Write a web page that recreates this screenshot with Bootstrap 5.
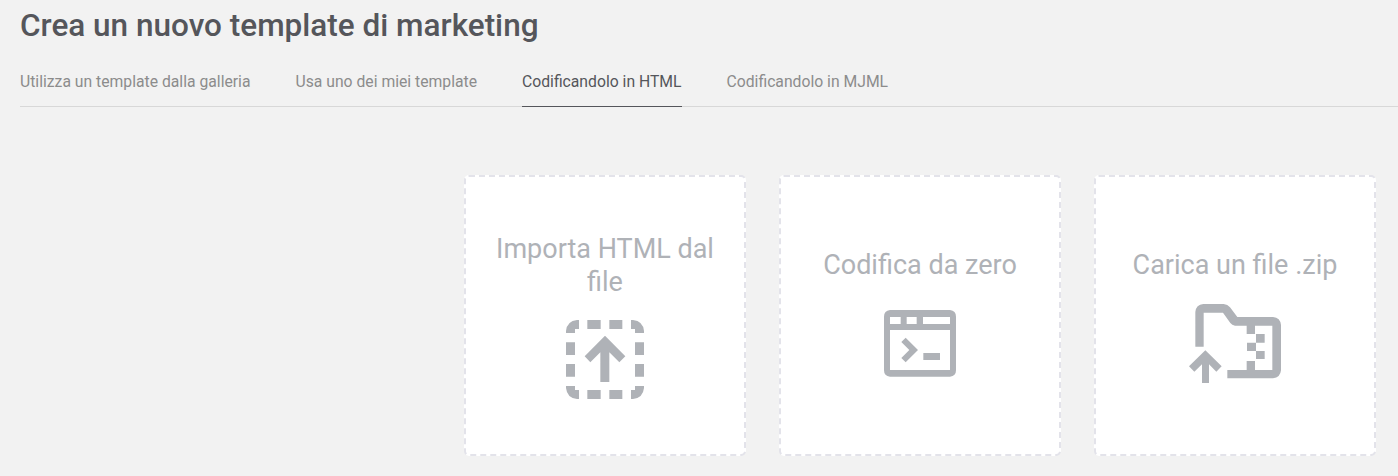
<!DOCTYPE html>
<html lang="it">
<head>
<meta charset="utf-8">
<meta name="viewport" content="width=device-width, initial-scale=1">
<title>Crea un nuovo template di marketing</title>
<link href="https://cdn.jsdelivr.net/npm/bootstrap@5.3.0/dist/css/bootstrap.min.css" rel="stylesheet">
<style>
body{background:#f2f2f2;font-family:Roboto,"Liberation Sans",sans-serif;color:#55565b;overflow:hidden}
main{padding-left:20px}
.page-title{font-size:31.5px;line-height:38px;font-weight:500;padding-top:7px}
.tabs{gap:45px;height:45px;margin-top:17px;border-bottom:1px solid #d8d8d8}
.tabs .nav-link{padding:8px 0 0;height:45px;font-size:15.72px;line-height:24px;color:#8c8c8c;white-space:nowrap}
.tabs .nav-link.active{color:#55565b;border-bottom:1px solid #55565b}
.choices{gap:33px;padding:68px 22px 0 0}
.choice{width:282px;height:281px;border:2px dashed #e3e3ea;border-radius:5px;background:#fff;color:#afb2b7}
.choice h2{font-size:27px;line-height:33px;font-weight:400;margin:0;padding:0 20px}
.choice svg{fill:#afb2b7;display:block}
.choice-import{padding-top:56px}
.choice-code,.choice-zip{padding-top:72px}
.choice-import svg{margin-top:21px}
.choice-code svg{margin-top:28px}
.choice-zip svg{margin-top:22px}
</style>
</head>
<body>
<main>
  <header>
    <h1 class="page-title mb-0">Crea un nuovo template di marketing</h1>
    <nav class="nav tabs flex-nowrap">
      <a class="nav-link" href="#">Utilizza un template dalla galleria</a>
      <a class="nav-link" href="#">Usa uno dei miei template</a>
      <a class="nav-link active" aria-current="page" href="#">Codificandolo in HTML</a>
      <a class="nav-link" href="#">Codificandolo in MJML</a>
    </nav>
  </header>
  <section class="choices d-flex justify-content-end">
    <div class="choice choice-import d-flex flex-column align-items-center text-center">
      <h2>Importa HTML dal file</h2>
      <svg width="78" height="79" viewBox="33 30 234 237" aria-hidden="true">
        <path d="M33 69V63Q36 33 66 30H72V57H60V69ZM97 30H137V57H97ZM163 30H202V57H163ZM228 30H234Q264 33 267 63V69H240V57H228ZM33 97H60V135H33ZM33 162H60V200H33ZM240 97H267V135H240ZM240 162H267V200H240ZM33 228H60V240H72V267H66Q36 264 33 234ZM97 240H137V267H97ZM163 240H202V267H163ZM228 267V240H240V228H267V234Q264 264 234 267Z"/>
        <path d="M150 77L211 139L193 157L163 127V216H136V127L106 157L89 139Z"/>
      </svg>
    </div>
    <div class="choice choice-code d-flex flex-column align-items-center text-center">
      <h2>Codifica da zero</h2>
      <svg width="72" height="67" viewBox="42 30 216 201" aria-hidden="true">
        <path fill-rule="evenodd" d="M60 30H240Q258 32 258 50V211Q258 229 240 230H60Q42 229 42 211V50Q42 32 60 30ZM60 51V72H92V51ZM110 51V72H140V51ZM159 51V72H240V51ZM60 90V210H240V90Z"/>
        <path d="M107 113L144 150L107 187L94 174L118 150L94 126ZM160 159H210V180H160Z"/>
      </svg>
    </div>
    <div class="choice choice-zip d-flex flex-column align-items-center text-center">
      <h2>Carica un file .zip</h2>
      <svg width="92" height="79" viewBox="27 27 276 237" aria-hidden="true">
        <path d="M46 155V51Q48 29 70 27H131Q143 28 150 37L172 66H279Q301 68 303 90V226Q301 248 279 250H142V225H200V198H225V225H277V92H225V117H200V92H165Q156 91 151 84L129 53H71V155Z"/>
        <path d="M228 117H254V143H228ZM201 143H228V168H201ZM228 168H254V192H228Z"/>
        <path d="M76 166L125 214L109 230L87 208V264H66V208L43 230L27 214Z"/>
      </svg>
    </div>
  </section>
</main>
<script src="https://cdn.jsdelivr.net/npm/bootstrap@5.3.0/dist/js/bootstrap.bundle.min.js"></script>
</body>
</html>
